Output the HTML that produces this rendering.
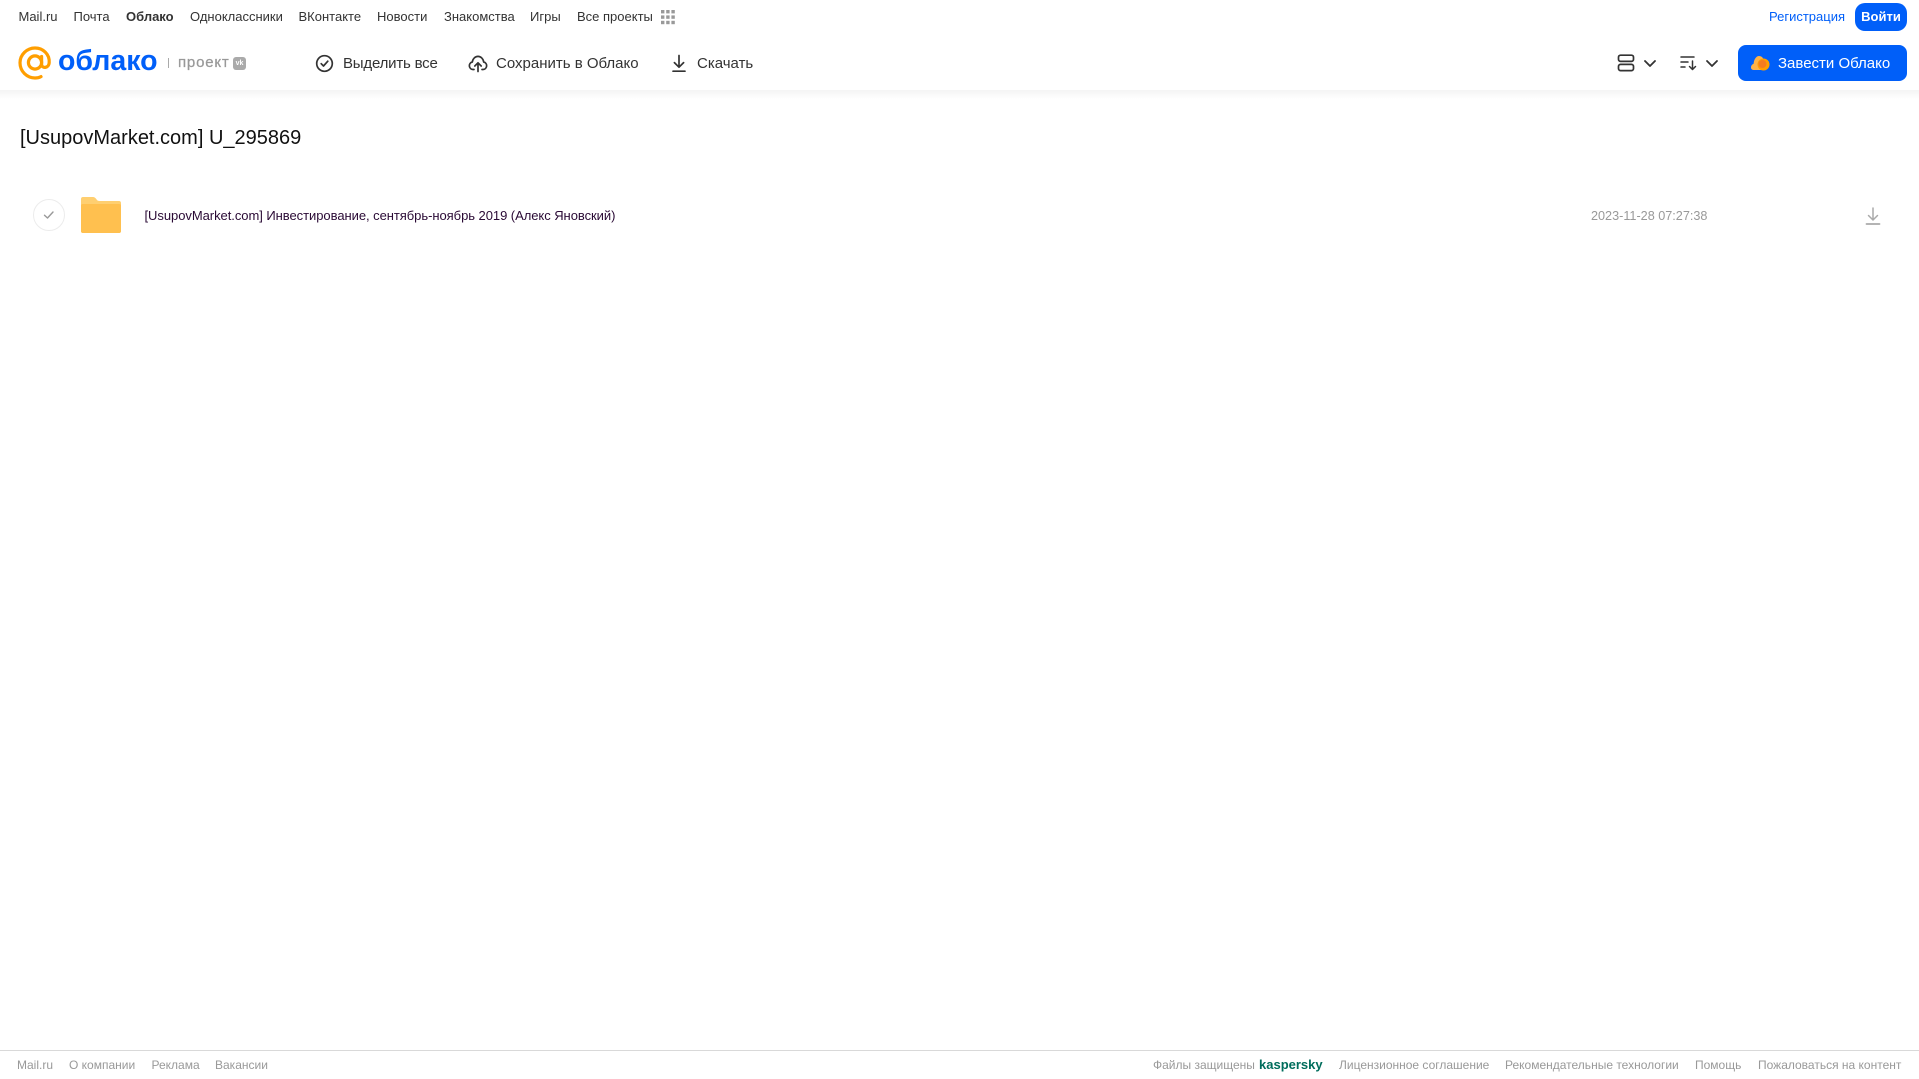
<!DOCTYPE html>
<html lang="ru">
<head>
<meta charset="utf-8">
<title>Облако</title>
<style>
html,body{margin:0;padding:0;background:#fff;}
body{width:1919px;height:1079px;position:relative;overflow:hidden;font-family:"Liberation Sans",Arial,sans-serif;}
.t{position:absolute;white-space:nowrap;line-height:18px;}
.n{top:8px;font-size:13px;color:#333;}
.a{top:55px;font-size:15px;color:#333;}
.f{top:1056px;font-size:12px;color:#999;}
svg{position:absolute;display:block;}
</style>
</head>
<body>
<div style="position:absolute;left:0;top:90px;width:1919px;height:9px;background:linear-gradient(#f4f4f4,#fff)"></div>

<span class="t n" style="left:18.5px">Mail.ru</span>
<span class="t n" style="left:73.5px">Почта</span>
<span class="t n" style="left:126px;font-weight:bold">Облако</span>
<span class="t n" style="left:190px">Одноклассники</span>
<span class="t n" style="left:298.5px">ВКонтакте</span>
<span class="t n" style="left:377px">Новости</span>
<span class="t n" style="left:444px">Знакомства</span>
<span class="t n" style="left:530px">Игры</span>
<span class="t n" style="left:577px">Все проекты</span>
<svg style="left:660px;top:10px" width="16" height="15" viewBox="0 0 16 15" fill="#999">
<rect x="1" y="0" width="3.4" height="3.4"/><rect x="6.2" y="0" width="3.4" height="3.4"/><rect x="11.4" y="0" width="3.4" height="3.4"/>
<rect x="1" y="5.4" width="3.4" height="3.4"/><rect x="6.2" y="5.4" width="3.4" height="3.4"/><rect x="11.4" y="5.4" width="3.4" height="3.4"/>
<rect x="1" y="10.8" width="3.4" height="3.4"/><rect x="6.2" y="10.8" width="3.4" height="3.4"/><rect x="11.4" y="10.8" width="3.4" height="3.4"/>
</svg>

<span class="t n" style="left:1769px;color:#005ff9">Регистрация</span>
<div style="position:absolute;left:1855px;top:3px;width:52px;height:28px;border-radius:10px;background:#005ff9;color:#fff;font-size:13px;font-weight:bold;line-height:28px;text-align:center">Войти</div>

<svg style="left:18px;top:46px" width="34" height="34" viewBox="0 0 34 34" fill="none" stroke="#ff9e00" stroke-width="3.2" stroke-linecap="round">
<circle cx="17" cy="16.5" r="6.6"/>
<path d="M23.6 10.5V18.5C23.6 22.5 30.8 22.8 31.2 16.5C31.7 8.2 25 2 17 2C9 2 2 8.6 2 16.8C2 25.5 9 32 17 32C19.4 32 21.2 31.6 23 30.6"/>
</svg>
<span class="t" style="left:58px;top:42px;font-size:28.5px;line-height:38px;font-weight:bold;color:#005ff9">облако</span>
<div style="position:absolute;left:168px;top:58px;width:1px;height:10px;background:#aaa"></div>
<span class="t" style="left:178px;top:54px;font-size:15px;color:#999;letter-spacing:.8px;-webkit-text-stroke:.25px #999">проект</span>
<div style="position:absolute;left:233px;top:57px;width:13px;height:13px;border-radius:3px;background:#aaa;color:#fff;font-size:7px;font-weight:bold;line-height:13px;text-align:center">vk</div>

<svg style="left:315px;top:54px" width="19" height="19" viewBox="0 0 19 19" fill="none" stroke="#333" stroke-width="1.7" stroke-linecap="round" stroke-linejoin="round">
<circle cx="9.5" cy="9.5" r="7.8"/><path d="M6.2 9.7L8.5 12L12.8 7.2"/>
</svg>
<span class="t a" style="left:343px;letter-spacing:-.2px">Выделить все</span>
<svg style="left:468px;top:54px" width="20" height="19" viewBox="0 0 20 19" fill="none" stroke="#333" stroke-width="1.7" stroke-linecap="round" stroke-linejoin="round">
<path d="M6 15.5H5A3.8 3.8 0 0 1 4.3 8C4.8 4.6 7.2 2.4 10 2.4C12.8 2.4 15.2 4.6 15.7 8A3.8 3.8 0 0 1 15 15.5H14"/>
<path d="M10 17.5V9M6.8 12L10 8.8L13.2 12"/>
</svg>
<span class="t a" style="left:496px">Сохранить в Облако</span>
<svg style="left:670px;top:54px" width="18" height="19" viewBox="0 0 18 19" fill="none" stroke="#333" stroke-width="1.7" stroke-linecap="round" stroke-linejoin="round">
<path d="M9 1.5V13M4.4 8.6L9 13.2L13.6 8.6M3 17.2H15"/>
</svg>
<span class="t a" style="left:697px">Скачать</span>

<svg style="left:1617px;top:54px" width="18" height="18" viewBox="0 0 18 18" fill="none" stroke="#333" stroke-width="1.7">
<rect x="1.5" y="1.2" width="15" height="6.2" rx="2"/><rect x="1.5" y="10.4" width="15" height="6.2" rx="2"/>
</svg>
<svg style="left:1643px;top:59px" width="14" height="9" viewBox="0 0 14 9" fill="none" stroke="#333" stroke-width="1.8" stroke-linecap="round" stroke-linejoin="round"><path d="M2 2L7 7L12 2"/></svg>
<svg style="left:1680px;top:55px" width="18" height="16" viewBox="0 0 18 16" fill="none" stroke="#333" stroke-width="1.5" stroke-linecap="round" stroke-linejoin="round">
<path d="M1 2H14M1 7H8M1 12H5M12.5 6V14.5M9.5 11.5L12.5 14.5L15.5 11.5"/>
</svg>
<svg style="left:1705px;top:59px" width="14" height="9" viewBox="0 0 14 9" fill="none" stroke="#333" stroke-width="1.8" stroke-linecap="round" stroke-linejoin="round"><path d="M2 2L7 7L12 2"/></svg>

<div style="position:absolute;left:1738px;top:45px;width:169px;height:36px;border-radius:8px;background:#005ff9"></div>
<svg style="left:1750px;top:54px" width="21" height="18" viewBox="0 0 21 18">
<path d="M1 13.5C1 11.5 2.4 10.2 3.6 9.8C4 5 6.4 2 9 2C11.6 2 13.6 4 14 7H16V16H4C2.2 16 1 15.2 1 13.5Z" fill="#ffb347"/>
<circle cx="13.5" cy="10.5" r="6" fill="#ff9e00"/><circle cx="12.5" cy="10" r="4" fill="#f57c1f"/>
</svg>
<span class="t a" style="left:1778px;color:#fff">Завести Облако</span>

<span class="t" style="left:20px;top:125px;font-size:20px;line-height:26px;color:#111">[UsupovMarket.com] U_295869</span>

<div style="position:absolute;left:33px;top:199px;width:30px;height:30px;border:1px solid #ececec;border-radius:50%"></div>
<svg style="left:42px;top:209px" width="14" height="12" viewBox="0 0 14 12" fill="none" stroke="#999" stroke-width="1.4" stroke-linecap="round" stroke-linejoin="round"><path d="M2.5 6.2L5.5 9L11 3"/></svg>
<svg style="left:81px;top:197px" width="40" height="36" viewBox="0 0 41 36" preserveAspectRatio="none">
<path d="M2 0H12C14 0 15 1 16 2.5C16.8 3.6 17.5 4 19 4H39C40.2 4 41 4.8 41 6V34C41 35.2 40.2 36 39 36H2C.8 36 0 35.2 0 34V2C0 .8 .8 0 2 0Z" fill="#ffcf70"/>
<path d="M0 8.5C0 7.5 .8 7 2 7H39C40.2 7 41 7.6 41 8.5V34C41 35.2 40.2 36 39 36H2C.8 36 0 35.2 0 34Z" fill="#ffc04f"/>
</svg>
<span class="t" style="left:144.5px;top:207px;font-size:13px;letter-spacing:-.05px;color:#2a0a35">[UsupovMarket.com] Инвестирование, сентябрь-ноябрь 2019 (Алекс Яновский)</span>
<span class="t" style="left:1591px;top:207px;font-size:12.65px;color:#999">2023-11-28 07:27:38</span>
<svg style="left:1864px;top:206px" width="18" height="20" viewBox="0 0 18 20" fill="none" stroke="#aaa" stroke-width="1.5" stroke-linecap="round" stroke-linejoin="round">
<path d="M9 2V14M4.5 9.5L9 14L13.5 9.5"/><path d="M2.5 18H15.5" stroke-width="1.8"/>
</svg>

<div style="position:absolute;left:0;top:1050px;width:1919px;height:1px;background:#d9d9d9"></div>
<span class="t f" style="left:17px">Mail.ru</span>
<span class="t f" style="left:69px">О компании</span>
<span class="t f" style="left:151.5px">Реклама</span>
<span class="t f" style="left:215px">Вакансии</span>
<span class="t f" style="left:1153px">Файлы защищены</span>
<span class="t f" style="left:1259px;color:#006d5c;font-weight:bold;font-size:13px">kaspersky</span>
<span class="t f" style="left:1339px">Лицензионное соглашение</span>
<span class="t f" style="left:1505px">Рекомендательные технологии</span>
<span class="t f" style="left:1695px">Помощь</span>
<span class="t f" style="left:1758px">Пожаловаться на контент</span>
</body>
</html>
